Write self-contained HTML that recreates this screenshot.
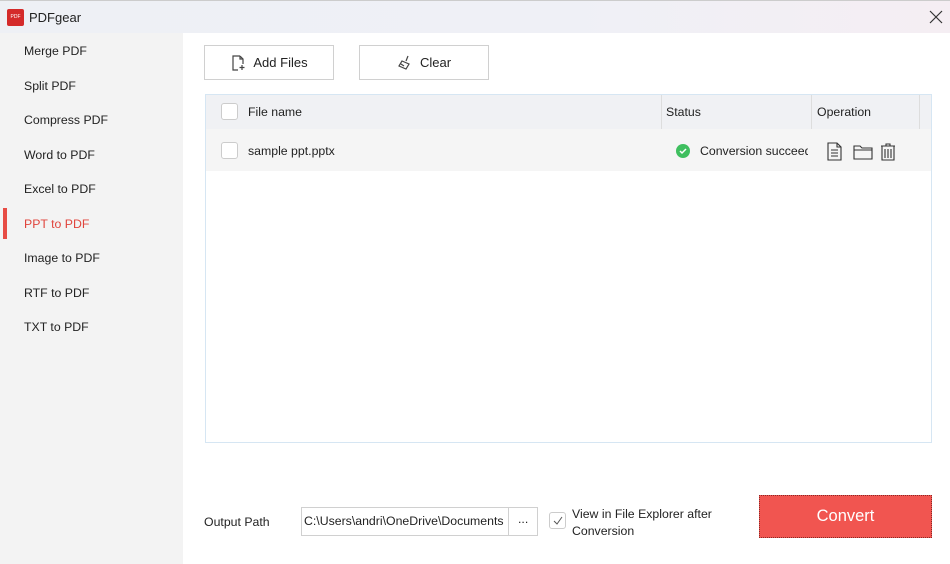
<!DOCTYPE html>
<html><head><meta charset="utf-8"><style>
*{margin:0;padding:0;box-sizing:border-box}
body{width:950px;height:564px;overflow:hidden;font-family:"Liberation Sans",sans-serif;font-size:12.3px;color:#222;background:#fff;position:relative}
.title{position:absolute;left:0;top:0;width:950px;height:33px;background:linear-gradient(90deg,#eef0f5 0%,#eff0f6 60%,#f5eef3 100%);border-top:1px solid #ccc}
.side{position:absolute;left:0;top:33px;width:183px;height:531px;background:#f3f3f3}
.side div{position:absolute;left:24px;font-size:12.3px;color:#222}
.abs{position:absolute}
.btn{position:absolute;top:45px;height:35px;border:1px solid #d0d0d0;background:#fff;display:flex;align-items:center;justify-content:center;font-size:13px}
.cb{position:absolute;width:17px;height:17px;border:1px solid #ccc;border-radius:3px;background:#fff}
</style></head><body>
<div class="title">
 <div class="abs" style="left:7px;top:8px;width:17px;height:17px;background:#d42a2a;border-radius:2px;color:#fff;font-size:5px;line-height:17px;text-align:center">PDF</div>
 <div class="abs" style="left:29px;top:9px;font-size:13px">PDFgear</div>
 <svg class="abs" style="left:929px;top:9px" width="14" height="14"><path d="M1 1L13 13M13 1L1 13" stroke="#333" stroke-width="1.2"/></svg>
</div>
<div class="side">
 <div style="top:11px">Merge PDF</div>
 <div style="top:46px">Split PDF</div>
 <div style="top:80px">Compress PDF</div>
 <div style="top:115px">Word to PDF</div>
 <div style="top:149px">Excel to PDF</div>
 <div style="top:184px;color:#e0443c">PPT to PDF</div>
 <div style="top:218px">Image to PDF</div>
 <div style="top:253px">RTF to PDF</div>
 <div style="top:287px">TXT to PDF</div>
 <span class="abs" style="left:3px;top:175px;width:4px;height:31px;background:#e74c44"></span>
</div>
<div class="btn" style="left:204px;width:130px"><svg width="16" height="16" style="margin-right:7px"><path d="M10 1H3v14h5M10 1l3 3v5M10 1v3h3M12 10v5M9.5 12.5h5" stroke="#444" fill="none" stroke-width="1.2"/></svg>Add Files</div>
<div class="btn" style="left:359px;width:130px"><svg width="16" height="16" style="margin-right:7px"><path d="M11 1L9 6M5 6l7 3-3 5-7-3zM4 9l3 2" stroke="#444" fill="none" stroke-width="1.2"/></svg>Clear</div>
<div class="abs" style="left:205px;top:94px;width:727px;height:349px;border:1px solid #d6e6f3;background:#fff"></div>
<div class="abs" style="left:206px;top:95px;width:725px;height:34px;background:#f0f1f4"></div>
<div class="abs" style="left:661px;top:95px;width:1px;height:34px;background:#ddd"></div>
<div class="abs" style="left:811px;top:95px;width:1px;height:34px;background:#ddd"></div>
<div class="abs" style="left:919px;top:95px;width:1px;height:34px;background:#ddd"></div>
<div class="cb" style="left:221px;top:103px"></div>
<div class="abs" style="left:248px;top:105px">File name</div>
<div class="abs" style="left:666px;top:105px">Status</div>
<div class="abs" style="left:817px;top:105px">Operation</div>
<div class="abs" style="left:206px;top:129px;width:725px;height:42px;background:#f5f5f5"></div>
<div class="cb" style="left:221px;top:142px"></div>
<div class="abs" style="left:248px;top:144px">sample ppt.pptx</div>
<svg class="abs" style="left:676px;top:144px" width="14" height="14"><circle cx="7" cy="7" r="7" fill="#3fbf5f"/><path d="M4 7l2 2 4-4" stroke="#fff" stroke-width="1.5" fill="none"/></svg>
<div class="abs" style="left:700px;top:144px;width:108px;overflow:hidden;white-space:nowrap">Conversion succeeded</div>
<svg class="abs" style="left:826px;top:141px" width="70" height="20"><path d="M2 2h9l4 4v13H2zM11 2v4h4M5 9h7M5 12h7M5 15h7" stroke="#333" fill="none" stroke-width="1.1"/><path d="M28 5h6l2 2h10v11H28zM28 9h18" stroke="#333" fill="none" stroke-width="1.1"/><path d="M55 5h14M60 5V3h4v2M56 5v14h12V5M59 8v9M62 8v9M65 8v9" stroke="#333" fill="none" stroke-width="1.1"/></svg>
<div class="abs" style="left:204px;top:515px">Output Path</div>
<div class="abs" style="left:301px;top:507px;width:237px;height:29px;border:1px solid #d0d0d0;background:#fff"></div>
<div class="abs" style="left:508px;top:507px;width:1px;height:29px;background:#d0d0d0"></div>
<div class="abs" style="left:304px;top:514px;width:203px;overflow:hidden;white-space:nowrap">C:\Users\andri\OneDrive\Documents</div>
<div class="abs" style="left:518px;top:512px">...</div>
<div class="cb" style="left:549px;top:512px"></div>
<svg class="abs" style="left:552px;top:515px" width="12" height="12"><path d="M2 6l3 3 5-7" stroke="#555" fill="none" stroke-width="1"/></svg>
<div class="abs" style="left:572px;top:506px;line-height:17px">View in File Explorer after<br>Conversion</div>
<div class="abs" style="left:759px;top:495px;width:173px;height:43px;background:#f15550;border:1px dotted #8a2a26;color:#fff;font-size:16.5px;display:flex;align-items:center;justify-content:center">Convert</div>
</body></html>
